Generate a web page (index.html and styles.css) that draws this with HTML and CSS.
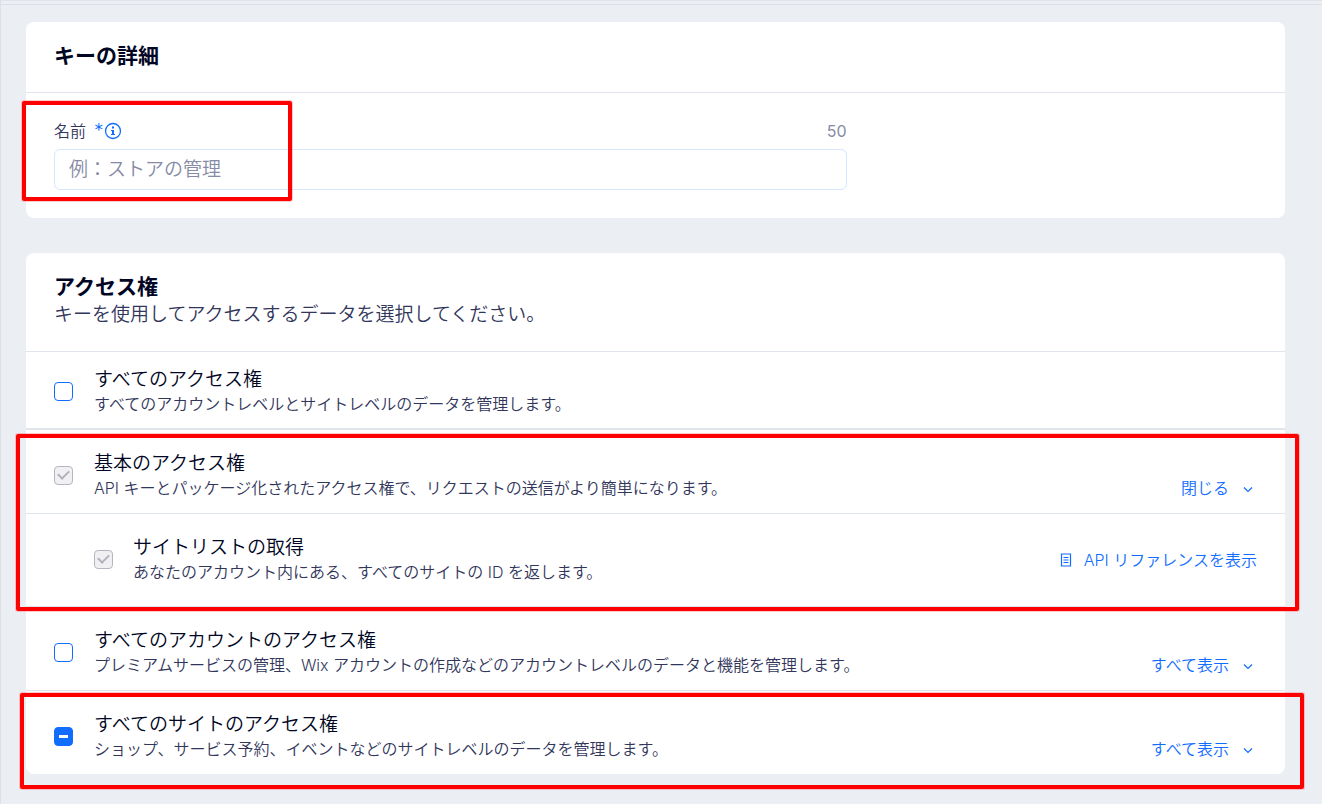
FILE: index.html
```html
<!DOCTYPE html>
<html lang="ja">
<head>
<meta charset="utf-8">
<meta name="viewport" content="width=device-width, initial-scale=1">
<title>API キー</title>
<link rel="stylesheet" href="styles.css">
</head>
<body>
<div class="top-strip"></div>
<main class="page">
  <section class="card">
    <header class="card-header">
      <h2 class="card-title">キーの詳細</h2>
    </header>
    <div class="card-body">
      <div class="field">
        <div class="field-top">
          <label class="field-label" for="key-name">名前</label>
          <span class="required">*</span>
          <svg class="info-icon" viewBox="0 0 18 18" aria-hidden="true">
            <circle cx="9" cy="9" r="7.5" fill="none" stroke="currentColor" stroke-width="1.3"/>
            <path d="M8 4.5h2v2H8zM7 8h3v4h1v1H7v-1h1V9H7z" fill="currentColor"/>
          </svg>
          <span class="counter">50</span>
        </div>
        <input class="text-input" id="key-name" type="text" maxlength="50" placeholder="例：ストアの管理">
        <div class="highlight highlight-field"></div>
      </div>
    </div>
  </section>

  <section class="card">
    <header class="card-header">
      <h2 class="card-title">アクセス権</h2>
      <p class="card-subtitle">キーを使用してアクセスするデータを選択してください。</p>
    </header>

    <div class="row row-all">
      <input class="check" type="checkbox" id="all">
      <label class="row-text" for="all">
        <span class="row-title">すべてのアクセス権</span>
        <span class="row-desc">すべてのアカウントレベルとサイトレベルのデータを管理します。</span>
      </label>
    </div>

    <div class="group">
      <div class="row">
        <input class="check" type="checkbox" id="basic" checked disabled>
        <label class="row-text" for="basic">
          <span class="row-title">基本のアクセス権</span>
          <span class="row-desc">API キーとパッケージ化されたアクセス権で、リクエストの送信がより簡単になります。</span>
        </label>
        <button class="toggle" type="button">閉じる
          <svg class="chevron" viewBox="0 0 18 18" aria-hidden="true"><path d="M5 7.5l4 4 4-4" fill="none" stroke="currentColor" stroke-width="1.2"/></svg>
        </button>
      </div>
      <div class="row row-child">
        <input class="check" type="checkbox" id="sites" checked disabled>
        <label class="row-text" for="sites">
          <span class="row-title">サイトリストの取得</span>
          <span class="row-desc">あなたのアカウント内にある、すべてのサイトの ID を返します。</span>
        </label>
        <a class="doc-link" href="#reference">
          <svg class="doc-icon" viewBox="0 0 12 14" aria-hidden="true"><path d="M1.5 1h9v12h-9zM3.5 4.5h5M3.5 7h5M3.5 9.5h5" fill="none" stroke="currentColor" stroke-width="1.2"/></svg>
          API リファレンスを表示</a>
      </div>
      <div class="highlight highlight-basic"></div>
    </div>

    <div class="row">
      <input class="check" type="checkbox" id="account">
      <label class="row-text" for="account">
        <span class="row-title">すべてのアカウントのアクセス権</span>
        <span class="row-desc">プレミアムサービスの管理、Wix アカウントの作成などのアカウントレベルのデータと機能を管理します。</span>
      </label>
      <button class="toggle" type="button">すべて表示
        <svg class="chevron" viewBox="0 0 18 18" aria-hidden="true"><path d="M5 7.5l4 4 4-4" fill="none" stroke="currentColor" stroke-width="1.2"/></svg>
      </button>
    </div>

    <div class="group">
      <div class="row row-last">
        <input class="check check-mixed" type="checkbox" id="site" aria-checked="mixed">
        <label class="row-text" for="site">
          <span class="row-title">すべてのサイトのアクセス権</span>
          <span class="row-desc">ショップ、サービス予約、イベントなどのサイトレベルのデータを管理します。</span>
        </label>
        <button class="toggle" type="button">すべて表示
          <svg class="chevron" viewBox="0 0 18 18" aria-hidden="true"><path d="M5 7.5l4 4 4-4" fill="none" stroke="currentColor" stroke-width="1.2"/></svg>
        </button>
      </div>
      <div class="highlight highlight-site"></div>
    </div>
  </section>
</main>
</body>
</html>
```

FILE: styles.css
```css
:root {
  --blue: #116dff;
  --ink: #000624;
  --muted: #32365b;
  --soft: #868aa5;
  --line: #dfe5eb;
  --page: #ebeff3;
}

* {
  box-sizing: border-box;
}

body {
  min-height: 100vh;
  margin: 0;
  border-left: 1px solid #dde1e6;
  background: var(--page);
  color: var(--ink);
  font: 350 16px/25px Inter, "Noto Sans CJK JP", sans-serif;
}

.top-strip {
  height: 5px;
  border-top: 1px solid #e0e4e9;
  border-bottom: 1px solid #dce0e6;
}

.page {
  display: flex;
  flex-direction: column;
  gap: 35px;
  padding: 17px 37px 28px 25px;
}

.card {
  background: #fff;
  border-radius: 8px;
}

.card-header {
  padding: 20px 28px 22px;
  border-bottom: 1px solid var(--line);
}

.card-title {
  margin: 0;
  font-size: 21px;
  font-weight: 700;
  line-height: 28px;
}

.card-subtitle {
  margin: 0;
  color: var(--muted);
  font-size: 19px;
  line-height: 28px;
}

.card-body {
  display: grid;
  grid-template-columns: 2fr 1fr;
  gap: 14px;
  padding: 26px 28px 28px;
}

.field,
.group {
  position: relative;
}

.field {
  display: flex;
  flex-direction: column;
  gap: 6px;
}

.field-top {
  display: flex;
  align-items: center;
  line-height: 24px;
}

.field-label {
  color: var(--muted);
}

.required {
  margin-left: 8px;
  color: var(--blue);
  font-size: 19px;
}

.info-icon {
  width: 18px;
  height: 18px;
  color: var(--blue);
}

.counter {
  margin-left: auto;
  color: var(--soft);
  font-weight: 400;
}

.text-input {
  width: 100%;
  height: 41px;
  padding: 0 14px;
  border: 1px solid #d6e6fe;
  border-radius: 6px;
  background: #fff;
  color: var(--ink);
  font: inherit;
  font-size: 19px;
}

.text-input::placeholder {
  color: var(--soft);
  opacity: 1;
}

.row {
  display: flex;
  align-items: center;
  gap: 21px;
  padding: 21px 28px 12px;
  border-bottom: 1px solid var(--line);
}

.row-all {
  padding-top: 15px;
  padding-bottom: 11px;
  border-bottom-width: 2px;
}

.row-child {
  gap: 20px;
  padding-bottom: 21px;
  padding-left: 68px;
}

.row-last {
  border-bottom: 0;
}

.row-text {
  display: flex;
  flex: 1;
  flex-direction: column;
}

.row-title {
  font-size: 19px;
}

.row-desc {
  color: var(--muted);
}

.check {
  display: grid;
  flex: none;
  place-items: center;
  width: 19px;
  height: 19px;
  margin: 0 0 2px;
  appearance: none;
  border: 1px solid var(--blue);
  border-radius: 4px;
  background: #fff;
}

.check:disabled {
  border-color: #b5b6c0;
  background: #f0f0f3;
}

.check:checked::before {
  content: "";
  width: 9px;
  height: 5px;
  margin-bottom: 3px;
  border: solid #b0b1bc;
  border-width: 0 0 2px 2px;
  transform: rotate(-45deg);
}

.check-mixed {
  background: var(--blue);
}

.check-mixed::before {
  content: "";
  width: 9px;
  height: 3px;
  background: #fff;
}

.toggle,
.doc-link {
  display: flex;
  align-items: center;
  color: var(--blue);
  text-decoration: none;
}

.toggle {
  align-self: flex-end;
  gap: 10px;
  padding: 0;
  border: 0;
  background: none;
  font: inherit;
}

.doc-link {
  gap: 12px;
}

.chevron {
  width: 18px;
  height: 18px;
}

.doc-icon {
  width: 12px;
  height: 14px;
}

/* Callout frames drawn over the form */
.highlight {
  position: absolute;
  border: 4px solid #f00;
  border-radius: 2px;
  box-shadow: 0 0 0 1px rgb(255 0 0 / 20%);
  pointer-events: none;
}

.highlight-field {
  top: -18px;
  bottom: -11px;
  left: -32px;
  width: 270px;
}

.highlight-basic {
  inset: 4px -14px -4px -10px;
}

.highlight-site {
  inset: 2px -19px -15px -6px;
}
```
